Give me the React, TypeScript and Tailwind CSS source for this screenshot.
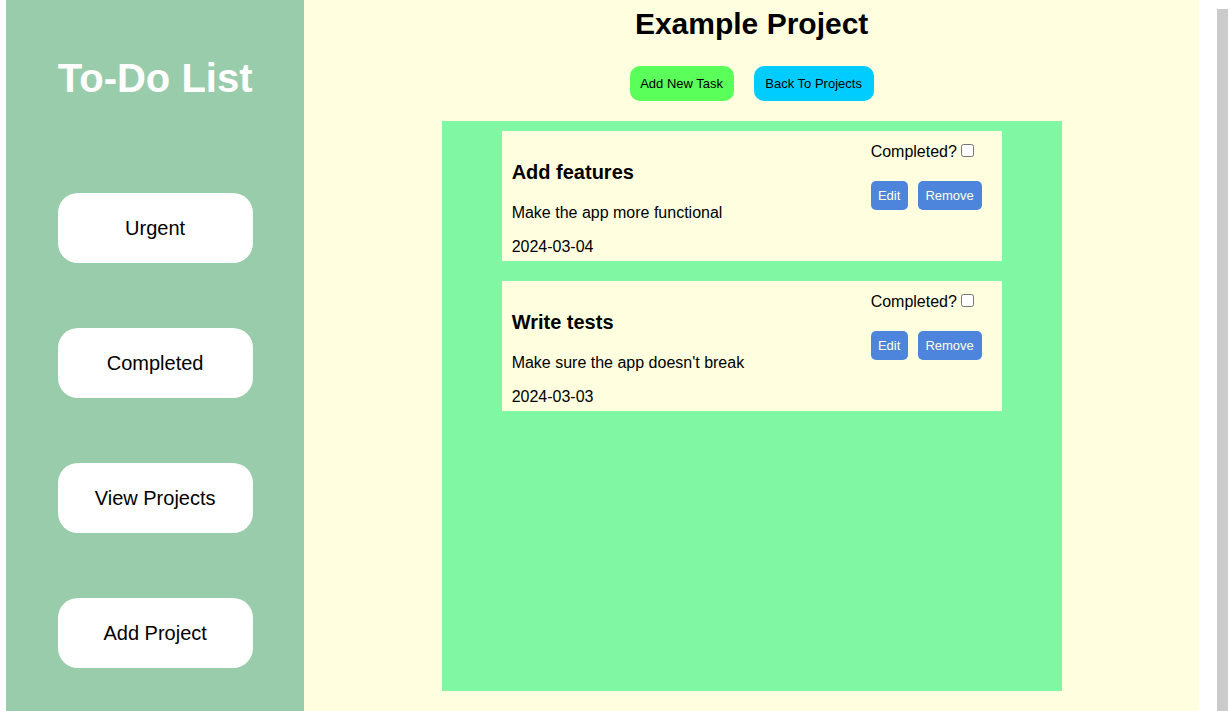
import { useState } from "react";

type Task = { id: number; title: string; details: string; due: string };

const tasks: Task[] = [
  { id: 1, title: "Add features", details: "Make the app more functional", due: "2024-03-04" },
  { id: 2, title: "Write tests", details: "Make sure the app doesn't break", due: "2024-03-03" },
];

const navItems = ["Urgent", "Completed", "View Projects", "Add Project"];

function Sidebar() {
  return (
    <aside className="flex w-1/4 shrink-0 flex-col items-center bg-[#99ccab]">
      <div className="flex w-[195px] flex-col">
        <h1 className="mt-[54px] text-center text-[40px] leading-12 font-bold whitespace-nowrap text-white">To-Do List</h1>
        <nav className="mt-[91px] flex flex-col gap-[65px]">
          {navItems.map((item) => (
            <button key={item} type="button" className="h-[70px] rounded-[20px] bg-white text-xl text-black">
              {item}
            </button>
          ))}
        </nav>
      </div>
    </aside>
  );
}

function TaskCard({ task }: { task: Task }) {
  const [done, setDone] = useState(false);
  const checkboxId = `completed-${task.id}`;
  return (
    <li className="flex h-[130px] w-[500px] max-w-full justify-between bg-[#ffffe0] pr-5 pl-[10px]">
      <div className="flex flex-col pt-[29px]">
        <h3 className="text-xl leading-6 font-bold">{task.title}</h3>
        <p className="mt-[19px] text-base leading-5">{task.details}</p>
        <p className="mt-[14px] text-base leading-5">{task.due}</p>
      </div>
      <div className="flex flex-col gap-[18px] pt-[10px]">
        <div className="flex items-start gap-1 leading-[22px]">
          <label htmlFor={checkboxId}>Completed?</label>
          <input
            id={checkboxId}
            type="checkbox"
            checked={done}
            onChange={(event) => setDone(event.target.checked)}
            className="mt-[3px] size-[13px]"
          />
        </div>
        <div className="flex gap-[10px]">
          <button type="button" className="h-[29px] w-[37px] rounded-[5px] bg-[#4d85dc] text-[13px] text-[#ffffe0]">
            Edit
          </button>
          <button type="button" className="h-[29px] w-16 rounded-[5px] bg-[#4d85dc] text-[13px] text-[#ffffe0]">
            Remove
          </button>
        </div>
      </div>
    </li>
  );
}

export default function App() {
  return (
    <div className="flex min-h-screen bg-white pr-[2px] pl-[6px] font-['Liberation_Sans',Arial,sans-serif] text-black">
      <div className="flex flex-1">
        <Sidebar />
        <main className="flex flex-1 flex-col items-center bg-[#ffffe0] pb-5">
          <h2 className="mt-[6px] text-3xl leading-9 font-bold">Example Project</h2>
          <div className="mt-6 flex gap-5">
            <button type="button" className="h-[35px] w-[104px] rounded-[10px] bg-[#5aff5a] text-[13px]">
              Add New Task
            </button>
            <button type="button" className="h-[35px] w-[120px] rounded-[10px] bg-[#00ccff] text-[13px]">
              Back To Projects
            </button>
          </div>
          <ul className="mt-5 flex w-[620px] max-w-full flex-1 flex-col items-center gap-5 bg-[#80f7a3] pt-[10px]">
            {tasks.map((task) => (
              <TaskCard key={task.id} task={task} />
            ))}
          </ul>
        </main>
      </div>
      <div className="ml-[18px] w-[11px] pt-[9px]">
        <div className="h-full bg-[#cbcbcb]" />
      </div>
    </div>
  );
}
